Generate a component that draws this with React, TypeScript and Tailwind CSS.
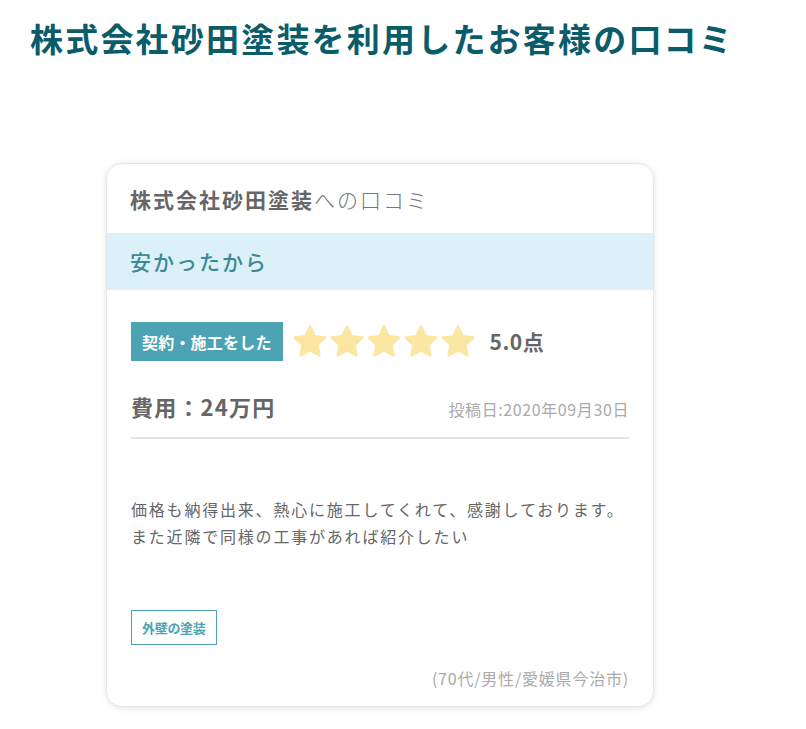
import React from "react";

const jp = { fontFamily: '"Noto Sans CJK JP", "Noto Sans", sans-serif' };

function Star() {
  return (
    <svg width="34" height="33" viewBox="0 0 34 33">
      <path
        d="M17 1.5 L21.6 11.2 L32.2 12.5 L24.4 19.8 L26.4 30.3 L17 25.1 L7.6 30.3 L9.6 19.8 L1.8 12.5 L12.4 11.2 Z"
        fill="#fbe6a2"
        stroke="#fbe6a2"
        strokeWidth="2.5"
        strokeLinejoin="round"
      />
    </svg>
  );
}

export default function App() {
  return (
    <div className="w-[806px] h-[729px] bg-white overflow-hidden" style={jp}>
      <h1 className="pl-[30px] pt-[14px] text-[33px] leading-[48px] font-bold text-[#0b5c6a] tracking-[2.2px]">
        株式会社砂田塗装を利用したお客様の口コミ
      </h1>
      <div className="ml-[106px] mt-[101px] w-[548px] h-[544px] rounded-[16px] border border-[#e6e6e6] shadow-[0_1px_6px_rgba(0,0,0,0.12)] overflow-hidden flex flex-col">
        <div className="h-[69px] flex items-center px-[23px] pt-[2px] text-[21px] tracking-[2px] text-[#666]">
          <span className="font-bold">株式会社砂田塗装</span>
          <span className="font-light text-[#777]">への口コミ</span>
        </div>
        <div className="h-[57px] bg-[#dcf0f7] flex items-center px-[23px] text-[21px] tracking-[2px] font-medium text-[#3b8a96]">
          安かったから
        </div>
        <div className="px-[24px] pt-[32px] flex flex-col">
          <div className="flex items-center">
            <div className="h-[39px] bg-[#4ba3b3] text-white font-bold text-[16px] flex items-center px-[11px] tracking-[0.2px]">
              契約・施工をした
            </div>
            <div className="flex items-center gap-[3px] ml-[10px]">
              <Star />
              <Star />
              <Star />
              <Star />
              <Star />
            </div>
            <div className="ml-[15px] text-[21px] font-bold text-[#666] tracking-[0.5px]">5.0点</div>
          </div>
          <div className="mt-[30px] flex items-end justify-between border-b-2 border-[#e3e3e3] pb-[16px]">
            <div className="text-[22px] font-bold text-[#666] leading-[30px] tracking-[1.2px]">費用：24万円</div>
            <div className="text-[16px] text-[#aaa] tracking-[0.6px] leading-[22px] mb-[1px]">投稿日:2020年09月30日</div>
          </div>
          <div className="mt-[57px] text-[16px] leading-[27px] tracking-[1.8px] text-[#666]">
            価格も納得出来、熱心に施工してくれて、感謝しております。
            <br />
            また近隣で同様の工事があれば紹介したい
          </div>
          <div className="mt-[60px] flex">
            <div className="h-[35px] border border-[#4ba3b3] px-[10px] flex items-center text-[13px] font-bold text-[#4ba3b3] tracking-[-0.3px]">
              外壁の塗装
            </div>
          </div>
          <div className="mt-[21px] text-right text-[16px] tracking-[0.8px] text-[#aaa]">
            (70代/男性/愛媛県今治市)
          </div>
        </div>
      </div>
    </div>
  );
}
